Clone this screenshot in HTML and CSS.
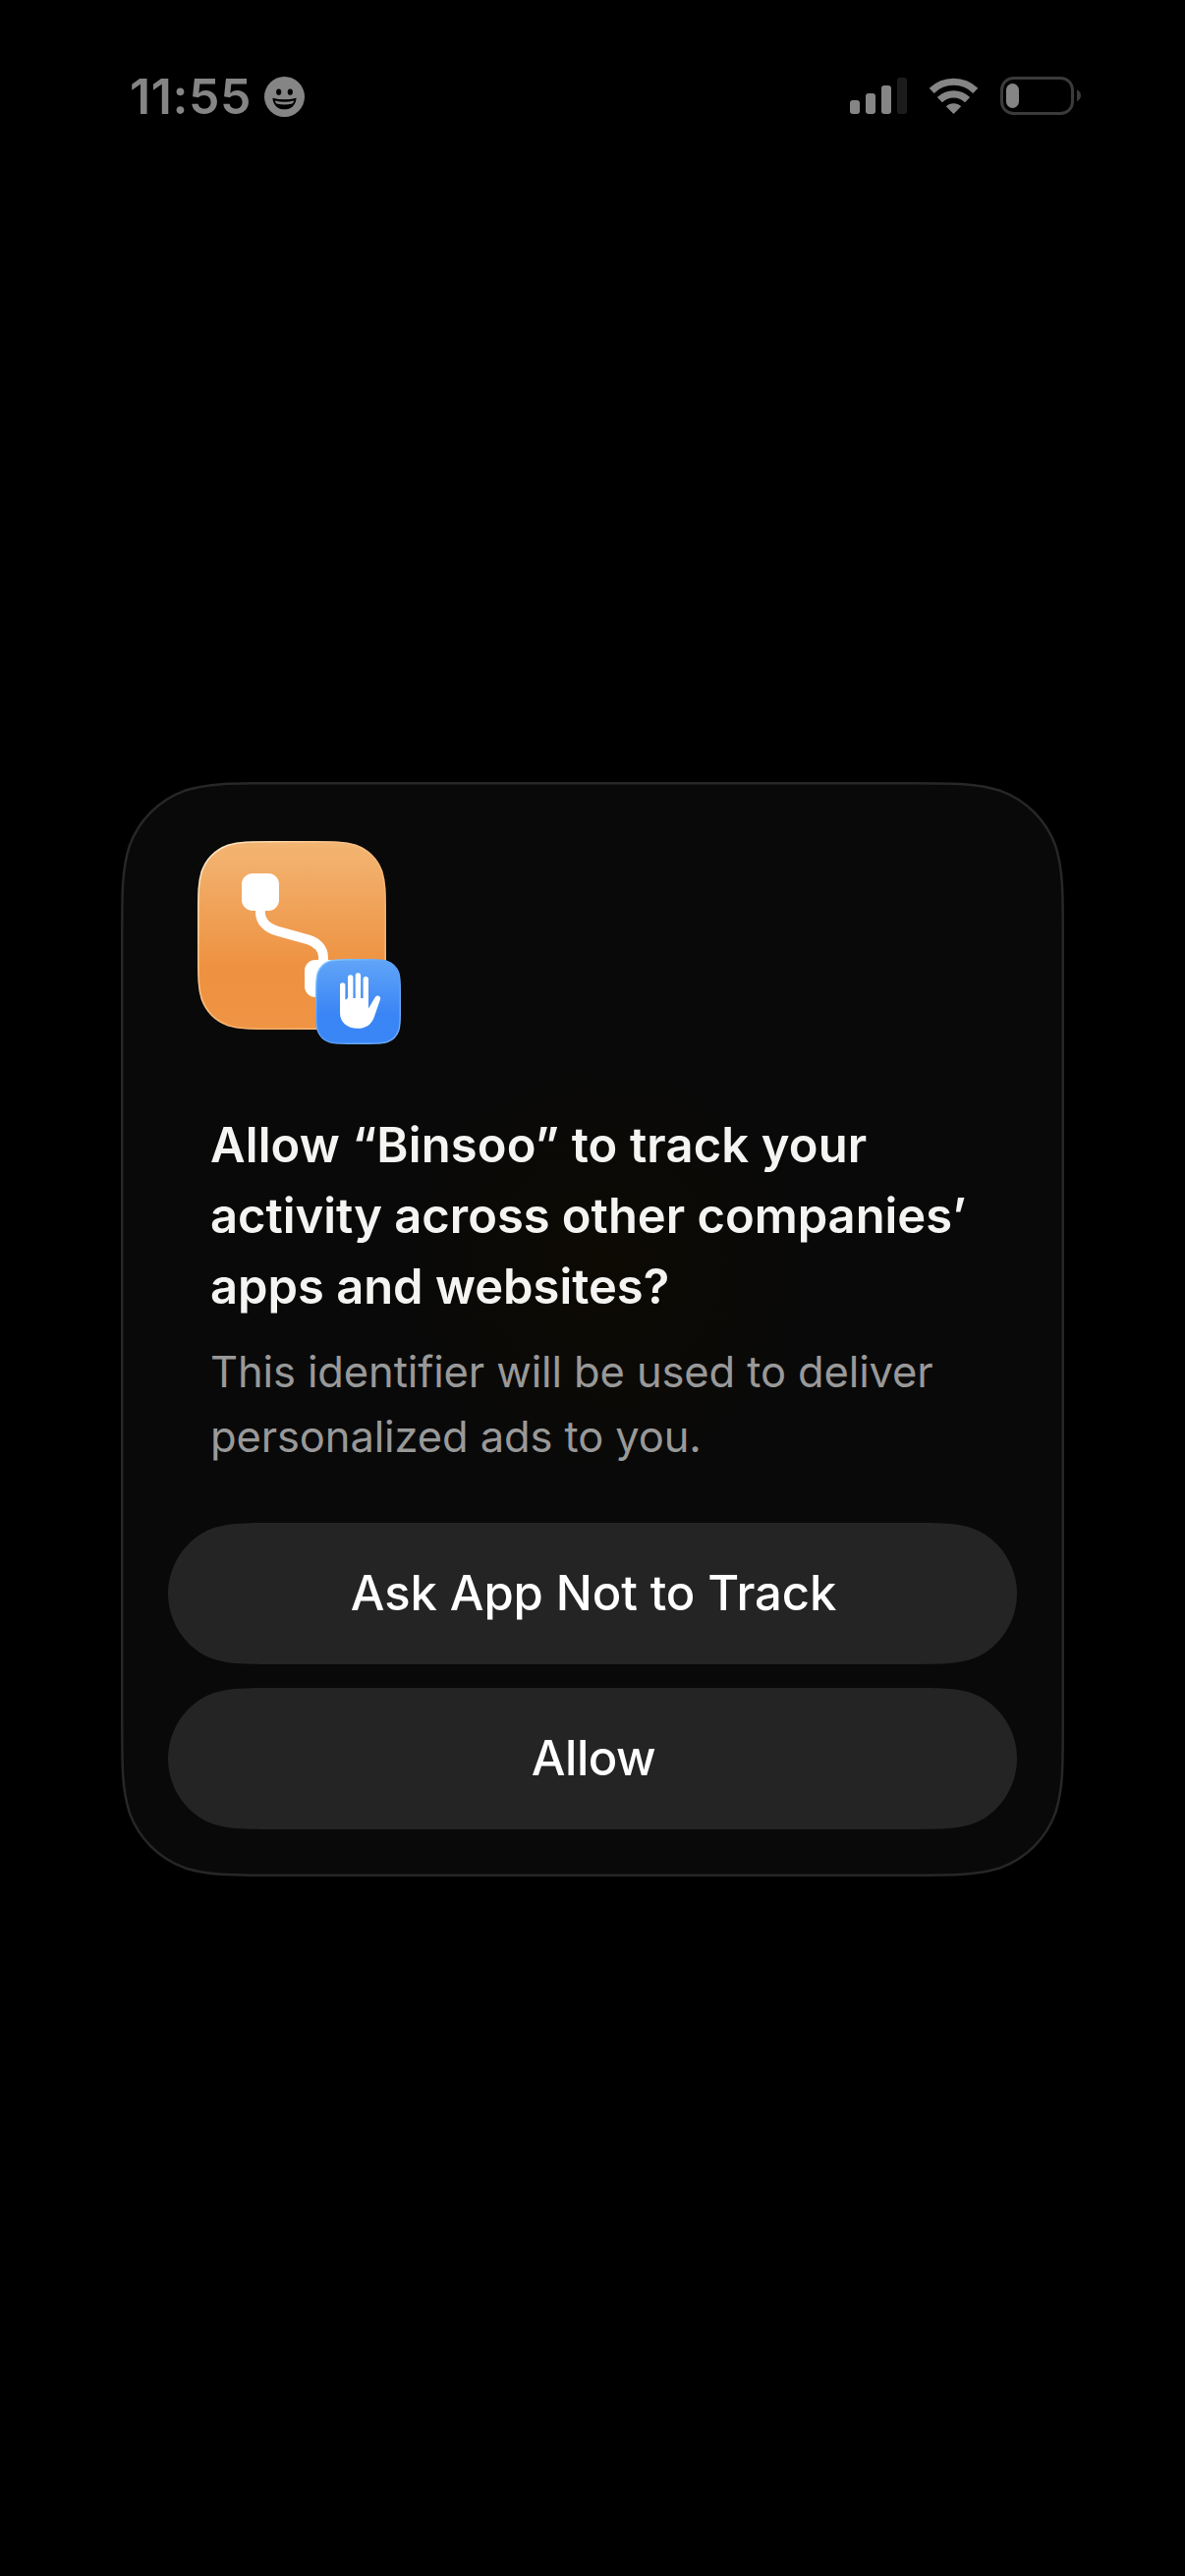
FILE: index.html
```html
<!DOCTYPE html>
<html lang="en">
<head>
<meta charset="utf-8">
<title>Tracking permission</title>
<link rel="stylesheet" href="styles.css">
</head>
<body>
<header class="status">
  <div class="status-left">
    <span class="time">11:55</span>
    <svg class="face" viewBox="0 0 41 41" width="41" height="41">
      <circle cx="20.5" cy="20.5" r="20.5" fill="#858585"/>
      <ellipse cx="14.7" cy="15.7" rx="2.6" ry="3.1"/>
      <ellipse cx="26.3" cy="15.7" rx="2.6" ry="3.1"/>
      <path d="M8.4 21.7Q20.5 25 32.6 21.7C32 29.5 27 33.3 20.5 33.3S9 29.5 8.4 21.7Z"/>
      <path d="M10.8 24.4Q20.5 26.9 30.2 24.4Q29.6 26.6 28.4 27.6Q20.5 29.4 12.6 27.6Q11.4 26.6 10.8 24.4Z" fill="#858585"/>
    </svg>
  </div>
  <svg class="indicators" viewBox="0 0 236 39" width="236" height="39">
    <g fill="#858585">
      <rect x="0" y="24" width="10" height="14" rx="3"/>
      <rect x="16" y="17" width="10" height="21" rx="3"/>
      <rect x="32" y="9" width="10" height="29" rx="3"/>
      <rect x="48" y="1" width="10" height="37" rx="3" fill="#1c1c1c"/>
      <path d="M105.5 38L97.8 30.3A11 11 0 0 1 113.2 30.3Z"/>
      <rect x="159" y="7" width="13" height="25" rx="6.5"/>
    </g>
    <g fill="none" stroke="#858585" stroke-width="7.2">
      <path d="M91.4 23.6A20 20 0 0 1 119.6 23.6"/>
      <path d="M83.2 14.3A32 32 0 0 1 127.8 14.3"/>
    </g>
    <rect x="154.5" y="1.5" width="72" height="36" rx="12" fill="none" stroke="#3a3a3a" stroke-width="3"/>
    <path d="M231 13.3Q235 15.5 235 19.3T231 25.3Z" fill="#3a3a3a"/>
  </svg>
</header>
<main class="card">
  <svg class="plate" viewBox="0 0 960 1114" width="960" height="1114">
    <defs>
      <radialGradient id="glow" gradientUnits="userSpaceOnUse" cx="490" cy="495" r="210">
        <stop offset="0" stop-color="#0d0a03"/>
        <stop offset="1" stop-color="#090909"/>
      </radialGradient>
    </defs>
    <path fill="url(#glow)" stroke="#272727" stroke-width="2.5" d="M804.7 1.25C849.1 1.25 871.3 1.25 895.1 8.8C921.2 18.3 941.7 38.8 951.2 64.9C958.75 88.7 958.75 110.9 958.75 155.3V958.7C958.75 1003.1 958.75 1025.3 951.2 1049.1C941.7 1075.2 921.2 1095.7 895.1 1105.2C871.3 1112.75 849.1 1112.75 804.7 1112.75H155.3C110.9 1112.75 88.7 1112.75 64.9 1105.2C38.8 1095.7 18.3 1075.2 8.8 1049.1C1.25 1025.3 1.25 1003.1 1.25 958.7V155.3C1.25 110.9 1.25 88.7 8.8 64.9C18.3 38.8 38.8 18.3 64.9 8.8C88.7 1.25 110.9 1.25 155.3 1.25Z"/>
  </svg>
  <div class="content">
    <svg class="app-icon" viewBox="0 0 207 207" width="207" height="207">
      <defs>
        <linearGradient id="orange" x1="0" y1="0" x2="0" y2="1">
          <stop offset="0" stop-color="#f3b572"/>
          <stop offset=".1" stop-color="#f2b06c"/>
          <stop offset=".68" stop-color="#ee9140"/>
          <stop offset="1" stop-color="#ef9444"/>
        </linearGradient>
        <linearGradient id="orange-rim" x1="0" y1="0" x2="1" y2="1">
          <stop offset="0" stop-color="#fff0d8"/>
          <stop offset=".3" stop-color="#f9c78e"/>
          <stop offset=".7" stop-color="#f5ad68"/>
          <stop offset="1" stop-color="#fbc68a"/>
        </linearGradient>
        <linearGradient id="blue" x1="0" y1="0" x2="0" y2="1">
          <stop offset="0" stop-color="#61a5f8"/>
          <stop offset=".65" stop-color="#3a85f6"/>
          <stop offset="1" stop-color="#3b86f6"/>
        </linearGradient>
        <linearGradient id="blue-rim" x1="0" y1="0" x2="1" y2="1">
          <stop offset="0" stop-color="#8fd0ff"/>
          <stop offset=".5" stop-color="#579cf8"/>
          <stop offset="1" stop-color="#75b4fa"/>
        </linearGradient>
      </defs>
      <path fill="url(#orange)" stroke="url(#orange-rim)" stroke-width="1.6" d="M117.9 .8C139 .8 149.6 .8 160.9 4.3C173.4 8.9 183.1 18.6 187.7 31.1C191.2 42.4 191.2 53 191.2 74.1V117.9C191.2 139 191.2 149.6 187.7 160.9C183.1 173.4 173.4 183.1 160.9 187.7C149.6 191.2 139 191.2 117.9 191.2H74.1C53 191.2 42.4 191.2 31.1 187.7C18.6 183.1 8.9 173.4 4.3 160.9C.8 149.6 .8 139 .8 117.9V74.1C.8 53 .8 42.4 4.3 31.1C8.9 18.6 18.6 8.9 31.1 4.3C42.4 .8 53 .8 74.1 .8Z"/>
      <rect x="45" y="33" width="38" height="38" rx="11" fill="#fff"/>
      <rect x="109" y="121" width="38" height="38" rx="11" fill="#fff"/>
      <path d="M64 69V73.5C64 81.5 70.5 88.7 80.7 91.4L113 100.5C122 103.3 128 110 128 118V124" fill="none" stroke="#fff" stroke-width="9.8"/>
      <g transform="translate(120 120)">
        <path fill="url(#blue)" stroke="url(#blue-rim)" stroke-width="1.4" d="M54.2 .7C63.4 .7 68.1 .7 73 2.3C78.5 4.3 82.7 8.5 84.7 14C86.3 18.9 86.3 23.6 86.3 32.8V54.2C86.3 63.4 86.3 68.1 84.7 73C82.7 78.5 78.5 82.7 73 84.7C68.1 86.3 63.4 86.3 54.2 86.3H32.8C23.6 86.3 18.9 86.3 14 84.7C8.5 82.7 4.3 78.5 2.3 73C.7 68.1 .7 63.4 .7 54.2V32.8C.7 23.6 .7 18.9 2.3 14C4.3 8.5 8.5 4.3 14 2.3C18.9 .7 23.6 .7 32.8 .7Z"/>
        <path d="M27.7 27V50M35.7 19V50M43.4 17V50M51.3 20.7V50" fill="none" stroke="#fff" stroke-width="5.4" stroke-linecap="round"/>
        <path d="M25 43L32 41V40H54V50.5L60.7 39.2C62.5 36 67.2 37.5 65.9 41.5L59.5 60C56.7 67.5 50.5 70.8 43 70.8C32.5 70.8 25 64.5 25 55Z" fill="#fff"/>
      </g>
    </svg>
    <h1 class="title"><span class="title-quoted">Allow “Binsoo” to track your</span><br>activity across other companies’<br>apps and websites?</h1>
    <p class="message">This identifier will be used to deliver<br>personalized ads to you.</p>
  </div>
  <div class="actions">
    <button class="action">
      <svg class="pill" viewBox="0 0 864 144" width="864" height="144"><path d="M110 0H754C786 0 802 0 818.5 5.4C845 15 864 42 864 72S845 129 818.5 138.6C802 144 786 144 754 144H110C78 144 62 144 45.5 138.6C19 129 0 102 0 72S19 15 45.5 5.4C62 0 78 0 110 0Z" fill="#242424"/></svg>
      <span class="label">Ask App Not to Track</span>
    </button>
    <button class="action">
      <svg class="pill" viewBox="0 0 864 144" width="864" height="144"><path d="M110 0H754C786 0 802 0 818.5 5.4C845 15 864 42 864 72S845 129 818.5 138.6C802 144 786 144 754 144H110C78 144 62 144 45.5 138.6C19 129 0 102 0 72S19 15 45.5 5.4C62 0 78 0 110 0Z" fill="#242424"/></svg>
      <span class="label label-short">Allow</span>
    </button>
  </div>
</main>
</body>
</html>
```
FILE: styles.css
```css
* { box-sizing: border-box; }
body {
  margin: 0;
  min-height: 2622px;
  background: #000;
  font-family: Inter, "Liberation Sans", sans-serif;
  display: flex;
  flex-direction: column;
  align-items: center;
}
.status {
  width: 100%;
  height: 796px;
  padding: 78px 105px 0 131px;
  display: flex;
  justify-content: space-between;
  align-items: flex-start;
  color: #858585;
}
.status-left { display: flex; align-items: flex-start; justify-content: space-between; width: 179px; }
.time { font-size: 50px; font-weight: 600; line-height: 40px; letter-spacing: .6px; padding-left: 1px; white-space: nowrap; }
.face, .indicators, .plate, .app-icon, .pill { display: block; flex: none; }
.card {
  width: 960px;
  height: 1114px;
  display: grid;
  grid-template-rows: 754px 1fr;
}
.plate { grid-area: 1 / 1 / 3 / 2; }
.content { grid-area: 1 / 1 / 2 / 2; padding: 60px 78px 0; }
.title {
  margin: 67px 0 0 13px;
  font-size: 48.9px;
  font-weight: 600;
  line-height: 72px;
  letter-spacing: -.02px;
  color: #f4f4f2;
  white-space: nowrap;
}
.title-quoted { letter-spacing: .15px; }
.message {
  margin: 17.4px 0 0 13px;
  font-size: 43.5px;
  line-height: 66px;
  letter-spacing: -.12px;
  color: #999;
  white-space: nowrap;
}
.actions { grid-area: 2 / 1 / 3 / 2; display: flex; flex-direction: column; align-items: center; gap: 24px; }
.action {
  display: grid;
  place-items: center;
  width: 864px;
  height: 144px;
  padding: 0;
  border: 0;
  background: none;
  font-family: inherit;
  color: #fff;
}
.pill, .label { grid-area: 1 / 1; }
.label { font-size: 49px; font-weight: 500; line-height: 60px; letter-spacing: -.1px; padding-left: 2px; white-space: nowrap; }
.label-short { letter-spacing: -.5px; }
```
